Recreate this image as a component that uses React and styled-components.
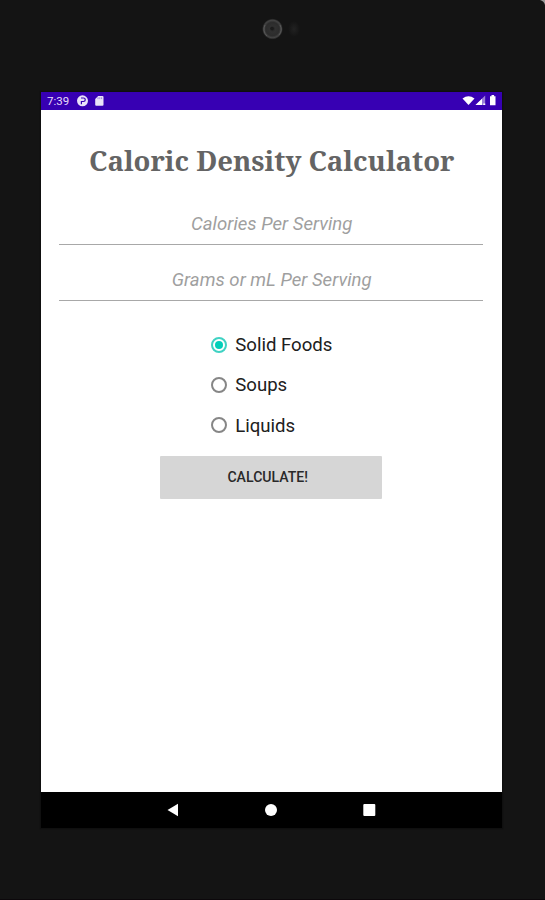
import React, { useState } from 'react'
import styled, { createGlobalStyle } from 'styled-components'

const GlobalStyle = createGlobalStyle`
  * {
    box-sizing: border-box;
  }
  body {
    margin: 0;
    background: #141414;
    font-family: Roboto, sans-serif;
  }
`

const Device = styled.div`
  width: 545px;
  height: 900px;
  display: flex;
  flex-direction: column;
  position: relative;
  overflow: hidden;
  background: #141414;
  border-bottom: 1px solid #0c080b;
`

const Bezel = styled.div`
  height: 92px;
  flex: none;
  display: flex;
  justify-content: center;
  padding-top: 14px;
`

const Corner = styled.svg`
  position: absolute;
  top: 0;
  right: 0;
`

const Screen = styled.div`
  width: 460.5px;
  height: 736px;
  margin-left: 41px;
  display: flex;
  flex-direction: column;
  background: #fff;
  box-shadow: 0 0 1px 1px #0f0f0f;
`

const StatusBar = styled.div`
  height: 18px;
  flex: none;
  display: flex;
  align-items: center;
  justify-content: space-between;
  padding: 0 5px 0 6px;
  background: #3700b3;
  color: #e6dcf7;
`

const StatusGroup = styled.div`
  display: flex;
  align-items: center;
  height: 18px;
`

const Time = styled.span`
  width: 30px;
  font-size: 11.5px;
  line-height: 18px;
`

const Content = styled.form`
  flex: 1;
  display: flex;
  flex-direction: column;
  align-items: center;
  padding: 31px 18px 0;
`

const Title = styled.h1`
  margin: 0;
  height: 40px;
  padding-left: 1px;
  font-family: "Noto Serif", "DejaVu Serif Condensed", "DejaVu Serif", serif;
  font-stretch: condensed;
  font-size: 27.5px;
  font-weight: bold;
  line-height: 40px;
  white-space: nowrap;
  color: #646464;
`

const Field = styled.input`
  width: 424px;
  height: 40px;
  margin-top: ${(props) => props.$gap}px;
  padding: 0 0 2px 1px;
  border: 0;
  border-bottom: 1px solid #a8a8a8;
  outline: 0;
  background: none;
  font-family: inherit;
  font-size: 18.6px;
  font-style: italic;
  text-align: center;
  color: #202020;

  &::placeholder {
    color: #9f9f9f;
    opacity: 1;
  }
`

const Options = styled.div`
  width: 120px;
  margin: 24px 0 10px;
  display: flex;
  flex-direction: column;
`

const Option = styled.label`
  height: 40.3px;
  display: flex;
  align-items: center;
  gap: 8px;
  font-size: 18.6px;
  white-space: nowrap;
  color: #202020;
  cursor: pointer;
`

const Radio = styled.input`
  appearance: none;
  flex: none;
  width: 16px;
  height: 16px;
  margin: 0 0 1px;
  padding: 2px;
  border: 2px solid #868686;
  border-radius: 50%;
  background-clip: content-box;

  &:checked {
    border-color: #3fd2c3;
    background-color: #03cfb9;
  }
`

const Button = styled.button`
  width: 222px;
  height: 43px;
  padding: 0 7px 0 0;
  border: 0;
  border-radius: 1px;
  background: #d6d6d6;
  font-family: inherit;
  font-size: 14.1px;
  font-weight: 500;
  color: #292929;
`

const NavBar = styled.div`
  height: 36px;
  flex: none;
  display: flex;
  align-items: center;
  justify-content: center;
  gap: 85px;
  background: #000;
`

const foods = ['Solid Foods', 'Soups', 'Liquids']

const Camera = () => (
  <svg width="70" height="30" viewBox="0 0 70 30">
    <defs>
      <radialGradient id="lens">
        <stop offset="0" stopColor="#202020" />
        <stop offset="0.3" stopColor="#303030" />
        <stop offset="0.65" stopColor="#2c2c2c" />
        <stop offset="0.85" stopColor="#444" />
        <stop offset="1" stopColor="#1c1c1c" />
      </radialGradient>
      <radialGradient id="sensor">
        <stop offset="0" stopColor="#222" />
        <stop offset="1" stopColor="#141414" />
      </radialGradient>
    </defs>
    <circle cx="34.5" cy="15" r="10.3" fill="url(#lens)" />
    <path d="M27 11a9 9 0 0 0 2 11M42 11a9 9 0 0 1-1 10" stroke="#585858" fill="none" />
    <circle cx="34" cy="14.5" r="1.8" fill="#1c1c1c" />
    <ellipse cx="56" cy="15" rx="6" ry="8" fill="url(#sensor)" />
  </svg>
)

const Notifications = () => (
  <svg width="30" height="18" viewBox="0 0 30 18" fill="#e9e2f8">
    <circle cx="5.5" cy="8.8" r="5.5" />
    <path d="M4 6h2.5a1.7 1.7 0 0 1 0 3.5H4.4v2.8" fill="none" stroke="#3700b3" strokeWidth="1.2" />
    <path d="M21.2 4h4.3q1 0 1 1v7.7q0 1-1 1h-6.3q-1 0-1-1V7z" />
    <path d="M21 5.3v1.8M22.8 5.3v1.8M24.6 5.3v1.8" stroke="#3700b3" strokeWidth=".4" />
  </svg>
)

const Signals = () => (
  <svg width="35" height="18" viewBox="0 0 35 18" fill="#fff">
    <path d="M.5 6.5q6-4.6 12 0L6.5 13z" />
    <path d="M23.2 3.5V13H13.5z" fillOpacity=".5" />
    <path d="M20 6.7V13h-6.5zM21.3 11.5h1.9V13h-1.9z" />
    <path d="M28 4.2h1.5V3h2.6v1.2h1.4v9H28z" />
  </svg>
)

const App = () => {
  const [food, setFood] = useState('Solid Foods')

  return (
    <Device>
      <GlobalStyle />
      <Corner width="5" height="5" viewBox="0 0 5 5">
        <path d="M0 0h5v5Q4 1 0 0z" fill="#999" />
      </Corner>
      <Bezel>
        <Camera />
      </Bezel>
      <Screen>
        <StatusBar>
          <StatusGroup>
            <Time>7:39</Time>
            <Notifications />
          </StatusGroup>
          <Signals />
        </StatusBar>
        <Content onSubmit={(e) => e.preventDefault()}>
          <Title>Caloric Density Calculator</Title>
          <Field $gap={24} placeholder="Calories Per Serving" />
          <Field $gap={16} placeholder="Grams or mL Per Serving" />
          <Options>
            {foods.map((item) => (
              <Option key={item}>
                <Radio
                  type="radio"
                  name="food"
                  checked={food === item}
                  onChange={() => setFood(item)}
                />
                {item}
              </Option>
            ))}
          </Options>
          <Button>CALCULATE!</Button>
        </Content>
        <NavBar>
          <svg width="13" height="14" viewBox="0 0 13 14">
            <path d="M.5 7L11 .8v12.4z" fill="#fff" />
          </svg>
          <svg width="13" height="14" viewBox="0 0 13 14">
            <circle cx="6" cy="7" r="6" fill="#fff" />
          </svg>
          <svg width="13" height="14" viewBox="0 0 13 14">
            <rect x=".3" y="1" width="12" height="12" rx="1" fill="#fff" />
          </svg>
        </NavBar>
      </Screen>
    </Device>
  )
}

export default App
